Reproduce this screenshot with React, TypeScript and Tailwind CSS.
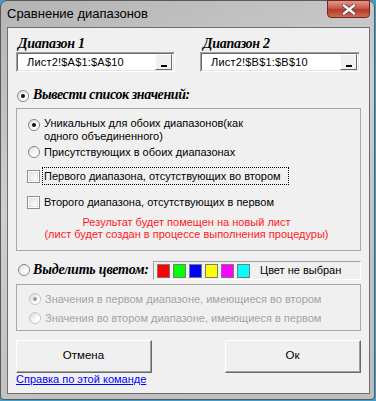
import { ReactNode } from 'react';
import clsx from 'clsx';

const sans = 'font-[Liberation_Sans,Arial,sans-serif]';
const serif = 'font-[Liberation_Serif,Times_New_Roman,serif]';

function Radio({ checked = false, disabled = false }: { checked?: boolean; disabled?: boolean }) {
  return (
    <div
      className={clsx(
        'w-[12px] h-[12px] rounded-full border flex items-center justify-center shrink-0',
        'bg-[linear-gradient(135deg,#d9d9d9,#ffffff_70%)]',
        disabled ? 'border-[#c4c4c4]' : 'border-[#858585]',
      )}
    >
      {checked && (
        <div className={clsx('w-[4px] h-[4px] rounded-full', disabled ? 'bg-[#9a9a9a]' : 'bg-[#111]')} />
      )}
    </div>
  );
}

function Checkbox() {
  return (
    <div className="w-[13px] h-[13px] border border-[#8f8f8f] bg-white shrink-0 flex">
      <div className="flex-1 m-[1px] border border-[#e2e2e2] bg-[linear-gradient(135deg,#e6e6e6,#ffffff)]" />
    </div>
  );
}

// sunken text field with the small "_" picker button
function RangeBox({ value }: { value: string }) {
  return (
    <div className="h-[20px] border border-t-[#a0a0a0] border-l-[#a0a0a0] border-b-white border-r-white flex">
      <div className="flex-1 flex items-center border border-t-[#696969] border-l-[#696969] border-b-[#e3e3e3] border-r-[#e3e3e3] bg-white pr-[1px]">
        <span className={clsx(sans, 'text-[11px] text-black pl-[9px] flex-1 tracking-[0.2px]')}>{value}</span>
        <div className="w-[17px] h-[16px] border border-t-white border-l-white border-b-[#696969] border-r-[#696969] bg-[#f0f0f0] flex items-end justify-center pb-[2px]">
          <div className="w-[6px] h-[2px] bg-black" />
        </div>
      </div>
    </div>
  );
}

function Button({ children }: { children: ReactNode }) {
  return (
    <div className="w-[136px] h-[33px] border border-t-white border-l-white border-b-[#696969] border-r-[#696969] bg-[#f0f0f0] flex">
      <div className={clsx(sans, 'flex-1 flex items-center justify-center text-[11.5px] text-black border-b border-r border-[#a0a0a0]')}>
        {children}
      </div>
    </div>
  );
}

const SWATCHES = ['#ff0000', '#00ff00', '#0000ff', '#ffff00', '#ff00ff', '#00ffff'];

export default function App() {
  return (
    <div className="w-[376px] h-[401px] bg-[#3c9fd0]">
      <div className="w-[375px] h-[400px] rounded-t-[7px] rounded-b-[4px] border border-[#5a5a5a] bg-[linear-gradient(160deg,#b4b4b4,#cfcfcf_40%,#c3c3c3_70%,#bdbdbd)] flex flex-col">
        {/* Title bar */}
        <div className="h-[26px] flex items-start justify-between shrink-0">
          <span className={clsx(sans, 'text-[13px] text-black pl-[6px] pt-[5px] leading-[16px]')}>
            Сравнение диапазонов
          </span>
          <div className="w-[43px] h-[18px] mr-[4px] mt-[-1px] rounded-b-[4px] border border-[#6e2a22] bg-[linear-gradient(180deg,#e2988c,#c85a48_45%,#b53a28_55%,#cf6a55)] flex items-center justify-center">
            <svg width="14" height="11" viewBox="0 0 14 11">
              <path d="M2 1.5 L12 9.5 M12 1.5 L2 9.5" stroke="#5a3a36" strokeWidth="4" strokeLinecap="square" />
              <path d="M2 1.5 L12 9.5 M12 1.5 L2 9.5" stroke="#ffffff" strokeWidth="2.4" strokeLinecap="square" />
            </svg>
          </div>
        </div>

        {/* Client area */}
        <div className="ml-[6px] w-[363px] h-[367px] border border-[#6e6e6e] bg-[#f0f0f0] px-[8px] flex flex-col">
          {/* Range labels and inputs */}
          <div className="mt-[8px] grid grid-cols-[159px_160px] gap-x-[25px]">
            <div className={clsx(serif, 'h-[16px] pl-[2px] text-[14px] tracking-[-0.3px] font-bold italic leading-[16px] text-black')}>Диапазон 1</div>
            <div className={clsx(serif, 'h-[16px] pl-[3px] text-[14px] tracking-[-0.3px] font-bold italic leading-[16px] text-black')}>Диапазон 2</div>
            <RangeBox value="Лист2!$A$1:$A$10" />
            <RangeBox value="Лист2!$B$1:$B$10" />
          </div>

          {/* Output list option */}
          <div className="mt-[15px] h-[16px] flex items-center">
            <div className="ml-[1px] mt-[1px]">
              <Radio checked />
            </div>
            <span className={clsx(serif, 'ml-[4px] text-[14px] tracking-[-0.4px] font-bold italic leading-[16px] text-black')}>
              Вывести список значений:
            </span>
          </div>

          <div className={clsx(sans, 'mt-[5px] h-[143px] border border-[#a8a8a8] flex flex-col text-[11px] text-black')}>
            <div className="mt-[8px] h-[26px] flex items-start pl-[11px]">
              <div className="mt-[2px]">
                <Radio checked />
              </div>
              <span className="ml-[4px] leading-[13px]">
                Уникальных для обоих диапазонов(как
                <br />
                одного объединенного)
              </span>
            </div>
            <div className="mt-[2px] h-[14px] flex items-center pl-[11px]">
              <Radio />
              <span className="ml-[4px] leading-[14px]">Присутствующих в обоих диапазонах</span>
            </div>
            <div className="mt-[8px] h-[18px] flex items-center pl-[10px]">
              <Checkbox />
              <span className="ml-[2px] h-[18px] w-[247px] border border-dotted border-black pl-[1px] leading-[16px]">
                Первого диапазона, отсутствующих во втором
              </span>
            </div>
            <div className="mt-[10px] h-[14px] flex items-center pl-[10px]">
              <Checkbox />
              <span className="ml-[3px] pl-[1px] leading-[14px]">Второго диапазона, отсутствующих в первом</span>
            </div>
            <div className="mt-[7px] text-center text-[#ff1a1a] leading-[12px] pr-[4px]">
              Результат будет помещен на новый лист
              <br />
              (лист будет создан в процессе выполнения процедуры)
            </div>
          </div>

          {/* Highlight option */}
          <div className="mt-[9px] h-[20px] flex items-center justify-between">
            <div className="flex items-center min-w-0">
              <div className="ml-[2px]">
                <Radio />
              </div>
              <span className={clsx(serif, 'ml-[3px] text-[14px] tracking-[-0.2px] whitespace-nowrap font-bold italic leading-[16px] text-black')}>
                Выделить цветом:
              </span>
            </div>
            <div className="w-[208px] h-[19px] mt-[1px] shrink-0 border border-t-[#a0a0a0] border-l-[#a0a0a0] border-b-white border-r-white bg-[#f0f0f0] flex items-center pl-[3px] gap-[3px]">
              {SWATCHES.map((c) => (
                <div key={c} className="w-[13px] h-[14px] border border-[#7a7a7a]" style={{ backgroundColor: c }} />
              ))}
              <span className={clsx(sans, 'ml-[7px] text-[11px] text-black')}>Цвет не выбран</span>
            </div>
          </div>

          <div className={clsx(sans, 'mt-[4px] h-[47px] border border-[#a8a8a8] flex flex-col text-[11px] text-[#a3a3a3]')}>
            <div className="mt-[7px] h-[14px] flex items-center pl-[12px]">
              <Radio checked disabled />
              <span className="ml-[4px] leading-[14px]">Значения в первом диапазоне, имеющиеся во втором</span>
            </div>
            <div className="mt-[5px] h-[14px] flex items-center pl-[12px]">
              <Radio disabled />
              <span className="ml-[4px] leading-[14px]">Значения во втором диапазоне, имеющиеся в первом</span>
            </div>
          </div>

          {/* Buttons */}
          <div className="mt-[9px] flex justify-between">
            <Button>Отмена</Button>
            <Button>Ок</Button>
          </div>
          <div className={clsx(sans, 'h-[13px] text-[11px] leading-[13px] text-[#0000ff] underline')}>
            Справка по этой команде
          </div>
        </div>
      </div>
    </div>
  );
}
